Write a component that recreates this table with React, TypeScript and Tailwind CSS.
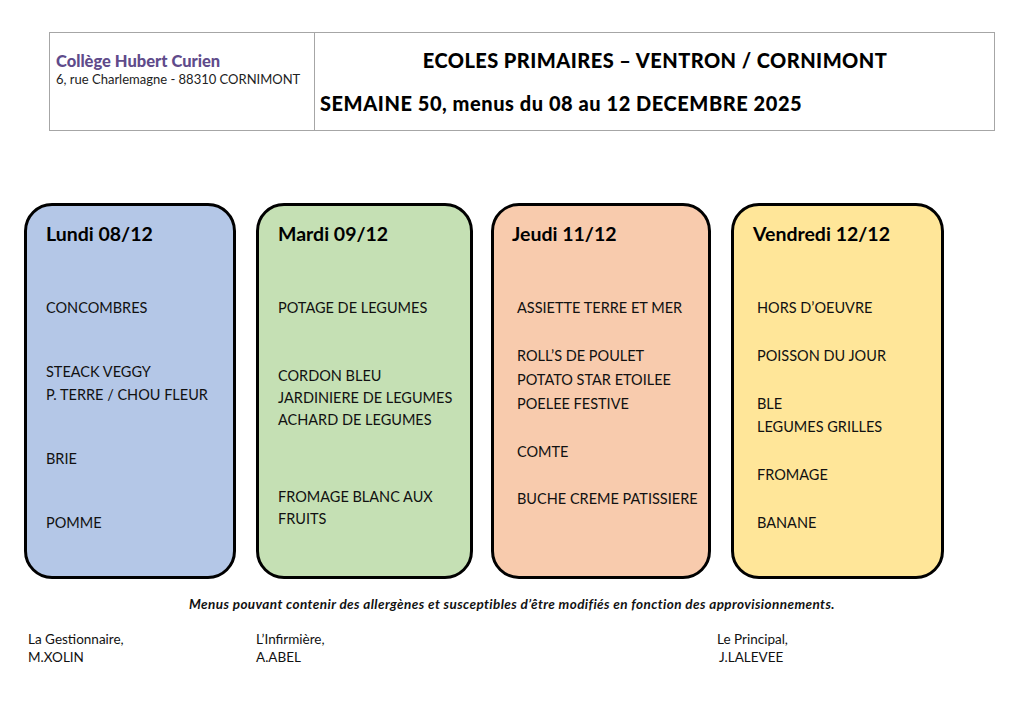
import React from "react";

type Group = string[];
type Day = {
  title: string;
  bg: string;
  titlePad: string;
  itemPad: string;
  lh: string;
  groups: { lines: Group; mt: string }[];
};

const days: Day[] = [
  {
    title: "Lundi 08/12",
    bg: "bg-[#b4c7e7]",
    titlePad: "pl-[19px]",
    itemPad: "pl-[19px]",
    lh: "leading-[23px]",
    groups: [
      { lines: ["CONCOMBRES"], mt: "mt-[50px]" },
      { lines: ["STEACK VEGGY", "P. TERRE / CHOU FLEUR"], mt: "mt-[41px]" },
      { lines: ["BRIE"], mt: "mt-[41px]" },
      { lines: ["POMME"], mt: "mt-[41px]" },
    ],
  },
  {
    title: "Mardi 09/12",
    bg: "bg-[#c5e0b4]",
    titlePad: "pl-[19px]",
    itemPad: "pl-[19px]",
    lh: "leading-[22px]",
    groups: [
      { lines: ["POTAGE DE LEGUMES"], mt: "mt-[51px]" },
      { lines: ["CORDON BLEU", "JARDINIERE DE LEGUMES", "ACHARD DE LEGUMES"], mt: "mt-[46px]" },
      { lines: ["FROMAGE BLANC AUX", "FRUITS"], mt: "mt-[55px]" },
    ],
  },
  {
    title: "Jeudi 11/12",
    bg: "bg-[#f8cbad]",
    titlePad: "pl-[18px]",
    itemPad: "pl-[23px]",
    lh: "leading-[24px]",
    groups: [
      { lines: ["ASSIETTE TERRE ET MER"], mt: "mt-[50px]" },
      { lines: ["ROLL\u2019S DE POULET", "POTATO STAR ETOILEE", "POELEE FESTIVE"], mt: "mt-[24px]" },
      { lines: ["COMTE"], mt: "mt-[24px]" },
      { lines: ["BUCHE CREME PATISSIERE"], mt: "mt-[23px]" },
    ],
  },
  {
    title: "Vendredi 12/12",
    bg: "bg-[#ffe699]",
    titlePad: "pl-[19px]",
    itemPad: "pl-[23px]",
    lh: "leading-[23px]",
    groups: [
      { lines: ["HORS D\u2019OEUVRE"], mt: "mt-[50px]" },
      { lines: ["POISSON DU JOUR"], mt: "mt-[25px]" },
      { lines: ["BLE", "LEGUMES GRILLES"], mt: "mt-[25px]" },
      { lines: ["FROMAGE"], mt: "mt-[25px]" },
      { lines: ["BANANE"], mt: "mt-[25px]" },
    ],
  },
];

const widths = ["w-[212px]", "w-[217px]", "w-[220px]", "w-[213px]"];
const margins = ["ml-[24px]", "ml-[20px]", "ml-[18px]", "ml-[20px]"];

function Card({ d, i }: { d: Day; i: number }) {
  return (
    <div
      className={`${widths[i]} ${margins[i]} h-[376px] ${d.bg} border-[3px] border-black rounded-[28px] pt-[16px] flex flex-col shrink-0`}
    >
      <div className={`${d.titlePad} text-[19.5px] font-bold leading-[24px] text-black`}>{d.title}</div>
      <div className={`${d.itemPad} text-[14.5px] ${d.lh} text-[#111]`}>
        {d.groups.map((g, gi) => (
          <div key={gi} className={g.mt}>
            {g.lines.map((l, li) => (
              <div key={li} className="whitespace-nowrap">{l}</div>
            ))}
          </div>
        ))}
      </div>
    </div>
  );
}

export default function App() {
  return (
    <div
      className="w-[1024px] h-[724px] bg-white relative overflow-hidden"
      style={{ fontFamily: "Lato, 'Open Sans', sans-serif" }}
    >
      <div className="pt-[32px] pl-[49px]">
        <div className="w-[946px] h-[99px] border border-[#a6a6a6] flex">
          <div className="w-[265px] border-r border-[#a6a6a6] pl-[6px] pt-[19px] shrink-0">
            <div className="text-[16.5px] font-black text-[#5f4b8b] leading-[19px]">Collège Hubert Curien</div>
            <div className="text-[13px] text-[#222] leading-[17px] mt-[0px]">6, rue Charlemagne - 88310 CORNIMONT</div>
          </div>
          <div className="flex-1 pl-[5px] pt-[15px]">
            <div className="text-[20px] font-black leading-[24px] text-black text-center pr-[4px] whitespace-nowrap tracking-[0.45px]">
              ECOLES PRIMAIRES – VENTRON / CORNIMONT
            </div>
            <div className="text-[20px] font-black leading-[24px] text-black mt-[19px] whitespace-nowrap tracking-[0.55px]">
              SEMAINE 50, menus du 08 au 12 DECEMBRE 2025
            </div>
          </div>
        </div>
      </div>

      <div className="flex mt-[72px]">
        {days.map((d, i) => (
          <Card key={i} d={d} i={i} />
        ))}
      </div>

      <div className="mt-[16px] text-center text-[13.5px] font-bold italic leading-[18px] text-[#111] tracking-[0.4px]">
        Menus pouvant contenir des allergènes et susceptibles d’être modifiés en fonction des approvisionnements.
      </div>

      <div className="flex mt-[17px] text-[13.5px] leading-[18px] text-[#111]">
        <div className="ml-[28px] w-[228px]">
          <div>La Gestionnaire,</div>
          <div>M.XOLIN</div>
        </div>
        <div className="w-[461px]">
          <div>L’Infirmière,</div>
          <div>A.ABEL</div>
        </div>
        <div>
          <div>Le Principal,</div>
          <div className="ml-[2px]">J.LALEVEE</div>
        </div>
      </div>
    </div>
  );
}
